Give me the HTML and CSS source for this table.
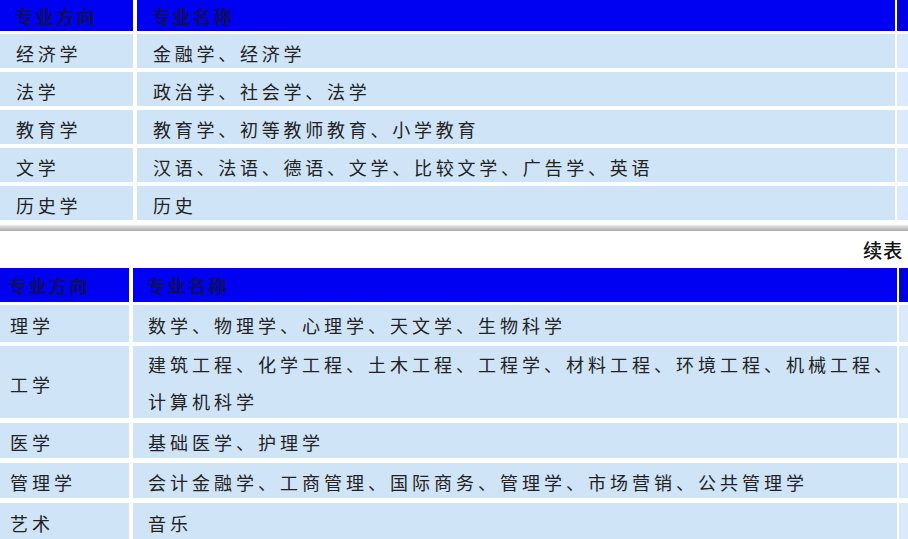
FILE: index.html
```html
<!DOCTYPE html>
<html lang="zh-CN">
<head>
<meta charset="utf-8">
<title>专业方向</title>
<link rel="stylesheet" href="styles.css">
</head>
<body>
<div class="page">
  <div class="tbl tbl-a">
    <div class="row head">
      <div class="cell c1">专业方向</div>
      <div class="cell c2">专业名称</div>
      <div class="cell c3"></div>
    </div>
    <div class="row first">
      <div class="cell c1">经济学</div>
      <div class="cell c2">金融学、经济学</div>
      <div class="cell c3"></div>
    </div>
    <div class="row">
      <div class="cell c1">法学</div>
      <div class="cell c2">政治学、社会学、法学</div>
      <div class="cell c3"></div>
    </div>
    <div class="row">
      <div class="cell c1">教育学</div>
      <div class="cell c2">教育学、初等教师教育、小学教育</div>
      <div class="cell c3"></div>
    </div>
    <div class="row">
      <div class="cell c1">文学</div>
      <div class="cell c2">汉语、法语、德语、文学、比较文学、广告学、英语</div>
      <div class="cell c3"></div>
    </div>
    <div class="row">
      <div class="cell c1">历史学</div>
      <div class="cell c2">历史</div>
      <div class="cell c3"></div>
    </div>
  </div>

  <div class="divider"></div>
  <div class="caption">续表</div>

  <div class="tbl tbl-b">
    <div class="row head">
      <div class="cell c1">专业方向</div>
      <div class="cell c2">专业名称</div>
      <div class="cell c3"></div>
    </div>
    <div class="row first">
      <div class="cell c1">理学</div>
      <div class="cell c2">数学、物理学、心理学、天文学、生物科学</div>
      <div class="cell c3"></div>
    </div>
    <div class="row tall">
      <div class="cell c1">工学</div>
      <div class="cell c2 multi">建筑工程、化学工程、土木工程、工程学、材料工程、环境工程、机械工程、<br>计算机科学</div>
      <div class="cell c3"></div>
    </div>
    <div class="row">
      <div class="cell c1">医学</div>
      <div class="cell c2">基础医学、护理学</div>
      <div class="cell c3"></div>
    </div>
    <div class="row">
      <div class="cell c1">管理学</div>
      <div class="cell c2">会计金融学、工商管理、国际商务、管理学、市场营销、公共管理学</div>
      <div class="cell c3"></div>
    </div>
    <div class="row">
      <div class="cell c1">艺术</div>
      <div class="cell c2">音乐</div>
      <div class="cell c3"></div>
    </div>
  </div>
</div>
</body>
</html>
```

FILE: styles.css
```css
html, body {
  margin: 0;
  padding: 0;
  background: #ffffff;
}

body {
  font-family: "Noto Sans CJK SC", "Noto Sans", sans-serif;
  font-size: 18px;
  color: #222222;
  width: 908px;
  height: 539px;
  overflow: hidden;
}

.page {
  display: flex;
  flex-direction: column;
}

.tbl {
  display: flex;
  flex-direction: column;
}

.row {
  display: flex;
  height: 34px;
}

.cell {
  display: flex;
  align-items: center;
  box-sizing: border-box;
  padding-top: 3px;
  white-space: nowrap;
  background: #d0e4f8;
}

.c3 {
  background: #dbeafb;
  flex: 1;
}

/* table A geometry */
.tbl-a .cell { letter-spacing: 3.75px; }
.tbl-a .row { margin-top: 4px; }
.tbl-a .row.head { margin-top: 0; height: 31px; }
.tbl-a .row.first { margin-top: 3px; }
.tbl-a .c1 { width: 133px; padding-left: 16px; margin-right: 4px; }
.tbl-a .c2 { width: 758px; padding-left: 16px; margin-right: 2px; }
.tbl-a .head .c1 { padding-left: 15px; }
.tbl-a .head .c2 { padding-left: 15px; }

/* table B geometry */
.tbl-b .cell { letter-spacing: 4px; }
.tbl-b .row { margin-top: 5px; height: 35px; }
.tbl-b .row.head { margin-top: 0; height: 34px; }
.tbl-b .row.first { margin-top: 3px; height: 37px; }
.tbl-b .row.tall { margin-top: 4px; height: 72px; }
.tbl-b .row:last-child { height: 36px; }
.tbl-b .c1 { width: 129px; padding-left: 10px; margin-right: 4px; }
.tbl-b .c2 { width: 764px; padding-left: 15px; margin-right: 2px; }
.tbl-b .head .c1 { padding-left: 8px; }
.tbl-b .head .c2 { padding-left: 14px; }

.multi {
  display: block;
  line-height: 37px;
  padding-top: 0;
}

/* header row */
.tbl .head .cell {
  background: #0000f2;
  color: #0c0c78;
  font-weight: 700;
  letter-spacing: 2.5px;
  padding-top: 0;
  text-shadow: 0.6px 0 0 #0c0c78, 0 0.4px 0 #0c0c78;
}
.tbl-a .head .cell {
  box-shadow: inset 0 -2px 0 #0000b4;
}
.tbl .head .c3 {
  background: #0000e6;
  border-left: 2px solid #10108a;
}

.divider {
  margin-top: 5px;
  height: 6px;
  background: linear-gradient(#ececec, #a9a9a9);
}

.caption {
  height: 37px;
  display: flex;
  align-items: center;
  justify-content: flex-end;
  padding-right: 5px;
  font-size: 19px;
  letter-spacing: 1px;
  color: #141414;
  text-shadow: 0.3px 0 0 #141414;
}
```
